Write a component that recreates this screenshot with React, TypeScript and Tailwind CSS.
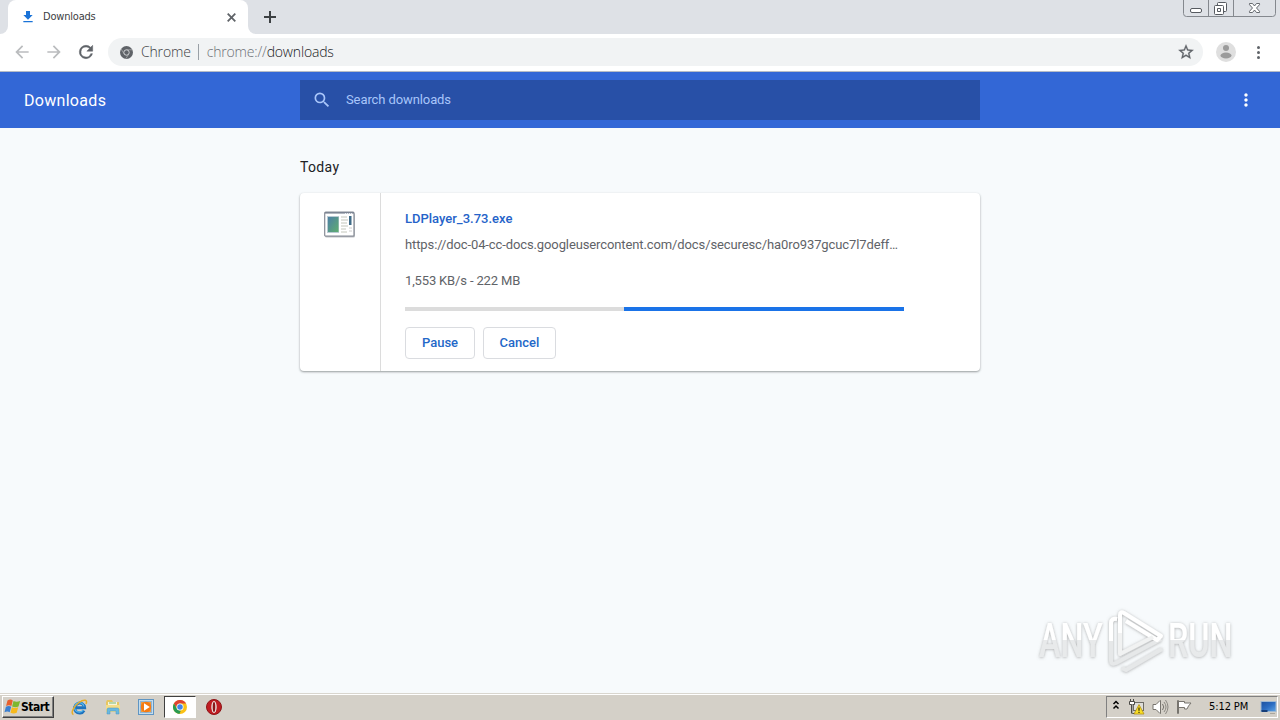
import { MdArrowBack, MdArrowForward, MdFileDownload, MdMoreVert, MdSearch } from "react-icons/md";

const WindowControls = () => (
  <svg width="95" height="18" className="mr-0.5" fill="none" stroke="#84888e">
    <path d="M.5 0v13.500q0 3 3 3h86q3 0 3-3V0M25.500 0v16M50.500 0v16" />
    <g stroke="#565a60" fill="#fff">
      <rect x="7.500" y="8.500" width="11" height="4" rx="1.500" />
      <rect x="34.500" y="2.500" width="9" height="9" rx="1" />
      <rect x="31.500" y="5.500" width="9" height="9" rx="1" />
      <path d="M34.500 8.500h3v3h-3z" />
      <path d="M66.500 3.500h3l2 2.500 2-2.500h3v1.200L73.500 8l3 3.300v1.200h-3l-2-2.500-2 2.500h-3v-1.200l3-3.300-3-3.300z" strokeWidth=".9" />
    </g>
  </svg>
);

const RefreshIcon = () => (
  <svg width="20" height="20" viewBox="0 0 24 24" className="ml-3" fill="#5f6368" stroke="#5f6368" strokeWidth=".6">
    <path d="M17.650 6.350A7.960 7.960 0 0 0 12 4a8 8 0 1 0 7.730 10h-2.080A6 6 0 1 1 12 6c1.660 0 3.140.69 4.220 1.780L13 11h7V4z" />
  </svg>
);

const StarIcon = () => (
  <svg width="18" height="18" viewBox="0 0 24 24" className="mr-2" fill="#5f6368" stroke="#5f6368" strokeWidth=".4">
    <path d="m22 9.240-7.190-.62L12 2 9.190 8.630 2 9.240l5.460 4.730L5.820 21 12 17.270 18.180 21l-1.630-7.030zM12 15.400l-3.760 2.270 1-4.280-3.320-2.880 4.380-.38L12 6.100l1.710 4.040 4.380.38-3.320 2.880 1 4.280z" />
  </svg>
);

const ChromeGray = () => (
  <svg width="13" height="13" viewBox="0 0 24 24" className="ml-3">
    <circle cx="12" cy="12" r="12" fill="#5f6368" />
    <circle cx="12" cy="12" r="5" fill="none" stroke="#d9dbdd" strokeWidth="1.700" />
    <path d="M12 7h11M7.700 14.500 2 5.500M16.300 14.500l-5.500 9" stroke="#b9bbbd" strokeWidth="1.200" />
  </svg>
);

const ExeIcon = () => (
  <svg width="32" height="28" viewBox="0 0 32 28">
    <defs>
      <linearGradient id="screen" x1="0" y1="0" x2="1" y2="1">
        <stop stopColor="#4c7fa5" />
        <stop offset="1" stopColor="#5fae70" />
      </linearGradient>
    </defs>
    <rect x="1" y="2" width="30" height="24.500" rx="1.500" fill="#bfc2c6" />
    <rect x=".7" y="1.200" width="29.300" height="24" rx="1" fill="#fff" stroke="#868b95" strokeWidth="1.200" />
    <path d="M1 1.800h29" stroke="#7d8593" strokeWidth="1.600" />
    <path d="M21 2.500h7" stroke="#e9edf2" strokeDasharray="1 1" />
    <rect x="3" y="5" width="12" height="17" fill="#b9cbd3" />
    <rect x="4" y="6" width="10.500" height="15" fill="url(#screen)" />
    <path d="M17 6h6M17 9h7M17 12h6M17 15h7M17 18h5M17 21h6" stroke="#c3c6bb" />
    <rect x="25" y="5" width="2.500" height="9" fill="#406c88" />
    <path d="M25 17h3M25 20h3" stroke="#ccc" />
  </svg>
);

const WindowsFlag = () => (
  <svg width="17" height="16" viewBox="0 0 16 16" className="shrink-0">
    <path d="M3 1.500q3-2 5.300 0L6.900 7q-2.300-1.500-5.300 0z" fill="#e8602c" />
    <path d="M9 2q3 1.500 6.700 0L14 7.500q-3 1.500-6.400 0z" fill="#7db72f" />
    <path d="M1.400 7.800q3-1.500 5.300 0L5.200 13.300q-2.200-1.500-5.200 0z" fill="#3b7fd0" />
    <path d="M7.400 8.300q3 1.500 6.300 0l-1.500 5.500q-3 1.500-6.200 0z" fill="#f7b91c" />
  </svg>
);

const ExplorerIcon = () => (
  <svg width="17" height="17" viewBox="0 0 17 17" fill="none">
    <path d="M13 11.500A5 5 0 1 1 13.600 8.700H5" stroke="#1e73be" strokeWidth="3" />
    <path d="M12.300 11A4.800 4.800 0 1 1 13 7.500" stroke="#55b7ec" strokeWidth="1.200" />
    <path d="M2.500 15.500C-1 14.500 3 7 8 3.500s9-3 7 1.500" stroke="#e8ad27" strokeWidth="1.500" />
  </svg>
);

const FolderIcon = () => (
  <svg width="16" height="16" viewBox="0 0 16 16">
    <path d="M1 3l1-2h5l1 2h6v10H1z" fill="#e7c662" />
    <path d="M3 3h9v4H3z" fill="#f8f5d9" />
    <path d="M4 4h7" stroke="#78b87a" />
    <path d="M1 6h14v7H1z" fill="#f4dd89" />
    <path d="M2 15V10.500q0-1.500 1.500-1.500h9q1.500 0 1.500 1.500V15h-3v-3H5v3z" fill="#69b8df" stroke="#4895c2" strokeWidth=".5" />
  </svg>
);

const PlayerIcon = () => (
  <svg width="16" height="16" viewBox="0 0 16 16">
    <rect x=".5" y=".5" width="15" height="15" fill="#c4dcec" stroke="#5f95c3" />
    <rect x="2.500" y="2.500" width="11" height="11" fill="#f09a3c" stroke="#8fb4d3" />
    <circle cx="8" cy="8" r="5.200" fill="#f47b13" />
    <path d="M6 4.200 11.800 8 6 11.800z" fill="#fff" />
  </svg>
);

const ChromeIcon = () => (
  <svg width="14" height="14" viewBox="0 0 24 24">
    <circle cx="12" cy="12" r="12" fill="#fbc116" />
    <path d="M1.600 6A12 12 0 0 1 22.400 6H12a6 6 0 0 0-5.200 9z" fill="#df4332" />
    <path d="M1.600 6 6.800 15A6 6 0 0 0 13.500 17.800L11 24A12 12 0 0 1 1.600 6z" fill="#299b52" />
    <circle cx="12" cy="12" r="6" fill="#fff" />
    <circle cx="12" cy="12" r="4.700" fill="#4285e8" />
  </svg>
);

const OperaIcon = () => (
  <svg width="16" height="16" viewBox="0 0 16 16">
    <circle cx="8" cy="8" r="7.500" fill="#c01c22" stroke="#8e1518" />
    <ellipse cx="8" cy="8" rx="2.700" ry="6" fill="#ece6e3" />
    <ellipse cx="8" cy="8" rx="1.300" ry="5" fill="#8b1619" />
  </svg>
);

const NetworkIcon = () => (
  <svg width="17" height="16" viewBox="0 0 17 16" className="ml-2 shrink-0">
    <rect x="5.500" y="3.500" width="10" height="8" fill="#dededa" stroke="#6d6b66" />
    <path d="M1.500 2.500h5v3h-2v9h4M2.500 0v2.500M5.500 0v2.500M1.500 2.500v3h2v9" fill="none" stroke="#4b4a46" />
    <path d="M2 3h4v2H2zM4 5.500h.5V14H4z" fill="#fff" />
    <path d="m11 5.500 5 9.500H6z" fill="#f8de25" stroke="#b39017" strokeWidth=".8" />
    <path d="M11 8.500v3.300M11 12.800V14" stroke="#332d0d" strokeWidth="1.200" />
  </svg>
);

const SpeakerIcon = () => (
  <svg width="17" height="16" viewBox="0 0 17 16" fill="none" stroke="#77746e" className="ml-[7px] shrink-0">
    <path d="M1 5.500h3l4-4h.5v13H8l-4-4H1z" fill="#fff" />
    <path d="M10.500 5q2.500 3 0 6" />
    <path d="M12 3q4 5 0 10M13.500 1q5 7 0 14" stroke="#8b8882" />
  </svg>
);

const FlagIcon = () => (
  <svg width="17" height="16" viewBox="0 0 17 16" fill="#fff" stroke="#77746e" className="ml-[7px] shrink-0">
    <path d="M1.500 1.500h1v13h-1zM2.500 2.500h6v1.500h6.500l-2.500 3-1.500 3H8.500V8.500h-6" />
  </svg>
);

const MonitorIcon = () => (
  <svg width="17" height="16" viewBox="0 0 17 16" className="ml-[11px] shrink-0">
    <defs>
      <linearGradient id="desktop" x1="0" y1="0" x2="1" y2="1">
        <stop stopColor="#1b4f9d" />
        <stop offset=".5" stopColor="#2a6cc2" />
        <stop offset="1" stopColor="#5fa4e4" />
      </linearGradient>
    </defs>
    <rect x="1" y="2.500" width="15" height="10" fill="url(#desktop)" stroke="#9fb9d3" />
    <path d="M1.500 12h6" stroke="#173e78" strokeWidth="2" />
    <path d="M10 14.500h5" stroke="#aaa69d" />
  </svg>
);

const Watermark = () => (
  <svg width="220" height="80" viewBox="0 0 220 80">
    <defs>
      <linearGradient id="mark" x1="0" y1="0" x2="0" y2="1">
        <stop offset=".5" stopColor="#fff" />
        <stop offset=".5" stopColor="#e8eaeb" />
      </linearGradient>
      <filter id="glow" x="-20%" y="-20%" width="140%" height="140%">
        <feDropShadow dx="0" dy="0.5" stdDeviation="1.800" floodColor="#777" floodOpacity=".6" />
      </filter>
    </defs>
    <g filter="url(#glow)" fill="url(#mark)" fontFamily="Roboto" fontSize="49" fontWeight="500">
      <text transform="translate(9 54) scale(.66 1)">ANY</text>
      <text transform="translate(138 54) scale(.66 1)">RUN</text>
    </g>
    <g filter="url(#glow)" fill="none" strokeWidth="4" strokeLinejoin="round">
      <path d="M87 16q-6-1-6 4v38q0 4 5 2l45-24" stroke="#e6e8e9" />
      <path d="M87 16q-6-1-6 4v18" stroke="#fff" />
      <path d="m92 65 4 2 36-21" stroke="#e6e8e9" />
      <path d="M90 50V12q0-4 4-2l37 23-4 4-31-19" stroke="#fff" />
      <path d="M90 30v21l33-17" stroke="#f1f2f2" />
    </g>
  </svg>
);

export default function App() {
  return (
    <div className="flex h-[720px] w-[1280px] flex-col overflow-hidden bg-[#f7fafc] font-['Roboto',sans-serif]">
      {/* Tab strip */}
      <div className="flex h-[34px] shrink-0 items-start bg-[#dee1e6]">
        <div className="h-[34px] w-2 bg-white">
          <div className="h-full rounded-br-lg bg-[#dee1e6]" />
        </div>
        <div className="flex h-[34px] w-60 items-center rounded-t-lg bg-white pr-3 pl-[12px]">
          <MdFileDownload size={16} className="mb-px text-[#1a73d8]" />
          <span className="ml-[7px] flex-1 font-['DejaVu_Sans_Condensed','DejaVu_Sans',sans-serif] text-[11px] tracking-[-0.2px] text-[#3c4043]">Downloads</span>
          <svg width="9" height="9" stroke="#5f6368" strokeWidth="1.800">
            <path d="m.7.7 7.600 7.600M8.300.7.700 8.300" />
          </svg>
        </div>
        <div className="h-[34px] w-2 bg-white">
          <div className="h-full rounded-bl-lg bg-[#dee1e6]" />
        </div>
        <svg width="12" height="12" className="mt-[11px] ml-2" stroke="#3c4043" strokeWidth="2">
          <path d="M6 0v12M0 6h12" />
        </svg>
        <div className="flex-1" />
        <WindowControls />
      </div>

      {/* Toolbar */}
      <div className="flex h-[38px] shrink-0 items-center border-b border-[#b6bcc6] bg-white pb-px">
        <MdArrowBack size={20} className="ml-3 text-[#babcbe]" />
        <MdArrowForward size={20} className="ml-3 text-[#babcbe]" />
        <RefreshIcon />
        <div className="ml-3 flex h-7 w-[1095px] items-center rounded-full bg-[#f1f3f4] font-['Open_Sans',sans-serif] text-sm font-light tracking-[-0.17px]">
          <ChromeGray />
          <span className="ml-2 text-[#3c4043]">Chrome</span>
          <span className="mr-2 ml-[7px] h-4 w-px bg-[#9aa0a6]" />
          <span className="flex-1 text-[#6d7176]">
            chrome://<span className="text-[#202124]">downloads</span>
          </span>
          <StarIcon />
        </div>
        <svg width="20" height="20" className="ml-[13px]">
          <circle cx="10" cy="10" r="10" fill="#dfdfdf" />
          <circle cx="10" cy="6" r="3" fill="#9b9b9b" />
          <ellipse cx="10" cy="13.500" rx="5.500" ry="3" fill="#9b9b9b" />
        </svg>
        <svg width="4" height="14" className="ml-5" fill="#5f6368">
          <circle cx="2.500" cy="2.500" r="1.500" />
          <circle cx="2.500" cy="7.500" r="1.500" />
          <circle cx="2.500" cy="12.500" r="1.500" />
        </svg>
      </div>

      {/* Page header */}
      <header className="flex h-14 shrink-0 items-center bg-[#3367d6]">
        <h1 className="w-[300px] pt-0.5 pl-6 text-base tracking-[0.3px] text-white">Downloads</h1>
        <div className="flex h-10 w-[680px] items-center bg-[#2850a7] pl-3">
          <MdSearch size={20} className="text-[#a9c6fa]" />
          <span className="ml-3.5 text-[13px] tracking-[-0.1px] text-[#a9c6fa]">Search downloads</span>
        </div>
        <MdMoreVert size={20} className="ml-64 text-white" />
      </header>

      {/* Downloads list */}
      <main className="relative flex-1">
        <div className="mx-auto w-[680px] pt-[29px]">
          <h2 className="h-9 text-sm leading-5 tracking-[0.35px] text-[#202124]">Today</h2>
          <div className="flex h-[178px] rounded bg-white shadow-[0_1px_2px_rgba(60,64,67,.4),0_1px_3px_rgba(60,64,67,.15)]">
            <div className="flex w-[81px] justify-center border-r border-[#dcdcdc] pt-[18px]">
              <ExeIcon />
            </div>
            <div className="w-[523px] pt-4 pl-6 text-[13px] leading-5 text-[#5f6368]">
              <div className="font-medium text-[#2563c9]">LDPlayer_3.73.exe</div>
              <div className="mt-1.5 whitespace-nowrap tracking-[-0.11px]">https://doc-04-cc-docs.googleusercontent.com/docs/securesc/ha0ro937gcuc7l7deff…</div>
              <div className="mt-4 tracking-[-0.15px]">1,553 KB/s - 222 MB</div>
              <div className="mt-4 flex h-1 bg-[#dcdcdc]">
                <div className="ml-auto w-[280px] bg-[#1a73e8]" />
              </div>
              <div className="mt-4 flex gap-2 font-medium text-[#2468c8]">
                <button className="h-8 w-[70px] rounded border border-[#dadce0]">Pause</button>
                <button className="h-8 w-[73px] rounded border border-[#dadce0]">Cancel</button>
              </div>
            </div>
          </div>
        </div>
        <div className="absolute right-[30px] bottom-[10px]">
          <Watermark />
        </div>
      </main>

      {/* Taskbar */}
      <footer className="flex h-[27px] shrink-0 items-center border-t border-[#d9d6cf] bg-[#d4d0c8] font-['DejaVu_Sans_Condensed','DejaVu_Sans',sans-serif] text-[11px] text-black shadow-[inset_0_1px_#fff]">
        <div className="ml-0.5 flex h-[22px] w-[52px] items-center border border-t-white border-r-[#404040] border-b-[#404040] border-l-white pl-px text-xs font-bold tracking-[-0.5px] shadow-[inset_-1px_-1px_#808080]">
          <WindowsFlag />
          <span className="leading-4">Start</span>
        </div>
        <div className="ml-[17px] flex items-center gap-[17px]">
          <ExplorerIcon />
          <FolderIcon />
          <PlayerIcon />
        </div>
        <div className="ml-2.5 flex h-[22px] w-8 items-center justify-center border border-t-[#404040] border-r-white border-b-white border-l-[#404040] bg-white">
          <ChromeIcon />
        </div>
        <div className="ml-2.5">
          <OperaIcon />
        </div>
        <div className="mr-0.5 ml-auto flex h-[22px] w-[172px] items-center border border-t-[#808080] border-r-white border-b-white border-l-[#808080] pl-[5px]">
          <svg width="8" height="10" fill="none" stroke="#000" strokeWidth="1.500" className="mb-1 shrink-0">
            <path d="m1.500 4 2.500-2.500L6.500 4M1.500 8.500 4 6l2.500 2.500" />
          </svg>
          <NetworkIcon />
          <SpeakerIcon />
          <FlagIcon />
          <span className="ml-4 w-10 pt-px whitespace-nowrap tracking-[-0.1px]">5:12 PM</span>
          <MonitorIcon />
        </div>
      </footer>
    </div>
  );
}
